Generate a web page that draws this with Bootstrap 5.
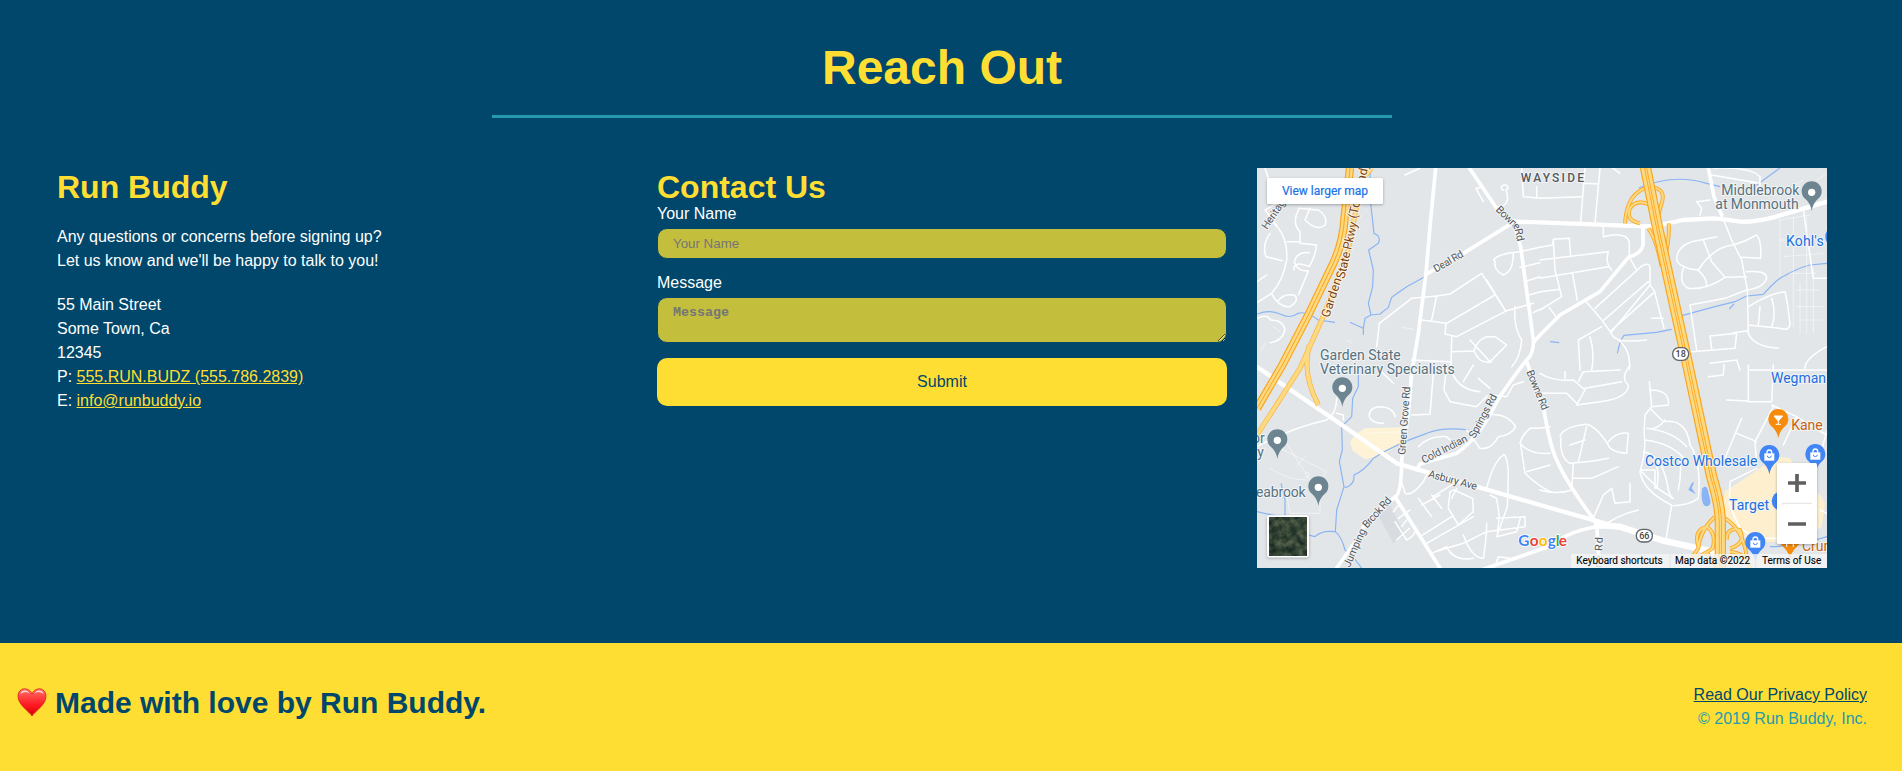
<!DOCTYPE html>
<html lang="en">
<head>
<meta charset="utf-8">
<meta name="viewport" content="width=device-width, initial-scale=1">
<title>Run Buddy</title>
<link href="https://cdn.jsdelivr.net/npm/bootstrap@5.3.0/dist/css/bootstrap.min.css" rel="stylesheet">
<style>
:root{--navy:#00476b;--sun:#ffde33;--teal:#259aad}
body{font-family:"Liberation Sans",Arial,sans-serif;background:var(--sun);color:#fff;overflow:hidden}
.reach{background:var(--navy);height:643px;padding:40px 75px 0 57px}
.reach h2{font-size:48px;line-height:56px;color:var(--sun);border-bottom:3px solid var(--teal);width:900px;height:78px}
.reach h3{font-size:32px;line-height:37px;color:var(--sun);padding-top:1px}
.cols{--bs-gutter-x:30px;margin-top:50px}
.info a{color:var(--sun)}
.info p{margin-top:19px}
.info address{margin-top:20px}
.contact label{line-height:20px;display:block}
.contact form{margin-top:-2px}
.field{display:block;width:100%;border:1px solid var(--navy);border-radius:10px;background:#c4be3d;padding:0 15px;font-size:13.333px;color:var(--navy);outline:0}
.field::placeholder{color:#757575;opacity:1}
input.field{height:31px;margin:4px 0 14px;font-family:"Liberation Sans",sans-serif}
textarea.field{height:46px;margin-top:4px;padding-top:7px;font-family:"Liberation Mono",monospace;font-weight:700;line-height:15px;resize:vertical}
.btn-send,.btn-send:hover{width:100%;height:48px;background:var(--sun);color:var(--navy);border:0;border-radius:10px;margin-top:15px;padding:0}
.roadmap{display:block;width:570px;height:400px;font-family:Roboto,sans-serif}
.foot{height:128px;background:var(--sun);padding:0 35px 0 17px}
.foot h2{font-size:30px;line-height:36px;color:var(--navy);margin-top:42px}
.legal{margin-top:40px;color:var(--teal)}
.legal a{color:var(--navy)}
.w{fill:none;stroke:#fff;stroke-linecap:round;stroke-linejoin:round}
.minor{stroke-width:4.5}.tiny{stroke-width:2.5;opacity:.6}
.river{fill:none;stroke:#8ab4f4;stroke-width:3.5;stroke-linejoin:round}
.lbl{paint-order:stroke;stroke:#f2f4f5;stroke-width:6px;stroke-linejoin:round;font-size:42px}
.rd{font-size:32px;fill:#54585c}.poi{fill:#56727f}.shop{fill:#1a6fe0}
</style>
</head>
<body>
<section class="reach">
  <h2 class="fw-bold text-center mx-auto mb-0">Reach Out</h2>
  <div class="row cols">
    <div class="col-4 info">
      <h3 class="fw-bold mb-0">Run Buddy</h3>
      <p class="mb-0">Any questions or concerns before signing up?<br>Let us know and we'll be happy to talk to you!</p>
      <address class="mb-0">55 Main Street<br>Some Town, Ca<br>12345<br>P: <a href="#">555.RUN.BUDZ (555.786.2839)</a><br>E: <a href="#">info@runbuddy.io</a></address>
    </div>
    <div class="col-4 contact">
      <h3 class="fw-bold mb-0">Contact Us</h3>
      <form>
        <label for="name">Your Name</label>
        <input class="field" id="name" placeholder="Your Name">
        <label for="msg">Message</label>
        <textarea class="field" id="msg" placeholder="Message"></textarea>
        <button type="button" class="btn btn-send">Submit</button>
      </form>
    </div>
    <div class="col-4">
      <svg class="roadmap" viewBox="21 24 1710 1200">
        <defs>
          <path id="pin" d="M0 56C-3 38-9 30-18 21A30 30 0 1 1 18 21C9 30 3 38 0 56Z"/>
          <g id="bag"><use href="#pin" fill="#4285f4"/><path d="M-15-8H15V14H-15Z" fill="#fff"/><path d="M-7-7V-11a7 7 0 0 1 14 0V-7" fill="none" stroke="#fff" stroke-width="4"/><path d="M-6-1a6 6 0 0 0 12 0" fill="none" stroke="#4285f4" stroke-width="3"/></g>
          <g id="place"><use href="#pin" fill="#6c8591"/><circle r="11" fill="#fff"/></g>
          <filter id="sh" x="-20%" y="-20%" width="140%" height="150%"><feDropShadow dx="0" dy="3" stdDeviation="4" flood-opacity=".3"/></filter>
          <filter id="aerial" x="0" y="0" width="1" height="1" color-interpolation-filters="sRGB"><feTurbulence type="fractalNoise" baseFrequency=".05" numOctaves="4" seed="8"/><feColorMatrix values=".42 0 0 0 0  .38 0 0 0 .08  .28 0 0 0 .07  0 0 0 0 1"/></filter>
        </defs>
        <rect x="21" y="24" width="1710" height="1200" fill="#e2e6e9"/>
        <!-- shaded areas -->
        <path d="M345 805L460 802 455 850 400 885 345 898 308 872 300 845 318 822Z" fill="#fef3d6"/>
        <path d="M1440 985L1500 945 1580 890 1620 895 1650 950 1710 1005 1725 1030 1715 1100 1640 1145 1500 1145 1440 1090 1420 1050 1422 995Z" fill="#fef0cf"/>
        <path d="M385 1065L420 1035 465 1125 430 1150Z" fill="#d8dce1"/>
        <path d="M1358 985q8-12 15 3l9 38q-2 15-17 12-14-10-9-53ZM1325 970l8-4-8 18 12 18-22-12Z" fill="#8ab4f4"/>
        <!-- streams -->
        <path class="river" d="M21 462Q60 448 90 462 120 478 145 460 170 452 205 480L255 487M300 487L340 505V524M360 24L362 130 372 220Q388 225 388 240L385 250 356 270 370 330 368 380 355 430 363 465M340 505L345 475 363 465 390 462 415 442 425 412 470 380 522 352M325 615L325 680 308 715 305 770 275 800 277 870 268 905 282 980 260 1050 256 1115Q215 1110 195 1130L155 1120M256 1115Q275 1130 285 1170L305 1185 335 1224M284 983Q315 975 312 945 345 930 370 895 430 855 530 820 580 800 655 810M21 1055Q60 1065 105 1070V1020L93 970M1166 84Q1270 40 1370 70L1410 80M1500 90Q1540 60 1590 24M1102 580Q1110 540 1122 526L1220 517 1265 508M1295 467L1395 440 1455 425 1490 408 1540 403Q1570 370 1590 355 1640 325 1680 315L1731 310M1438 447L1452 432M900 545L928 548M1560 1160Q1640 1160 1731 1130"/>
        <!-- neighbourhood streets, quadrant by quadrant -->
        <g class="w minor">
          <path d="M130 60L60 180Q115 220 110 300 100 360 65 400L21 428M45 24L80 130 45 150 80 195M145 145L205 150Q235 170 225 195 200 215 165 180L180 145M145 150Q125 190 150 215V245H112M150 250L200 255Q195 290 178 320 130 300 132 330M178 278Q140 275 133 305 140 335 175 333L145 405M65 402Q90 445 120 440 150 420 133 405 100 400 85 422M60 220Q35 255 48 290L98 302M50 345L21 365M21 475Q50 460 62 480 100 480 105 510 95 545 60 548"/>
          <path d="M380 560L388 490 485 415 560 408 600 402 695 340 765 450M545 480L560 408M515 480L590 490 735 405M588 490L585 522 620 530 770 452 850 430M710 360L765 450M605 530L603 625M603 575L672 573Q680 540 710 530L735 530 770 555 720 605 660 540M672 573Q690 615 725 605M795 440Q790 500 815 540 810 595 785 620M730 300Q745 280 810 275L870 262M810 322L870 308M832 362L870 350M838 405L870 395M850 458L870 448M735 302Q730 330 760 345 790 335 790 280M700 125L678 85 700 80M760 90a10 8 0 1 1 8 0Q785 140 740 140M815 24L820 110 870 115M860 80V110M855 60H870M485 600L600 605M465 45L510 24"/>
        </g>
        <g class="w minor" transform="translate(870)">
          <path d="M0 115L125 110M135 24L122 186M180 24L165 190M130 70L175 72M190 200V230L215 225Q265 220 268 250V290M0 300L205 275Q195 310 215 330M0 262L38 255 40 238 88 235 92 288M0 355L205 320M40 238L45 330 65 410 0 450M97 338L112 420M0 395L60 388M28 443L48 470M165 445L305 318Q330 305 330 325V375L215 515M330 375L345 395 210 515M192 480L325 365M268 292L290 330M138 425Q190 480 220 530 240 550 320 540M185 500L115 540 120 630M150 530Q165 580 155 630M220 530Q275 560 268 630M240 40L218 24M345 400L372 505M335 475L370 475M530 230L455 245Q410 260 410 300 420 325 475 330 520 260 580 255 615 245 650 225 665 240 662 295L605 292M490 240L515 305 555 352 620 350M430 325Q415 370 445 385 500 390 555 352M475 332Q500 350 500 380M620 335Q680 330 680 355 670 385 620 390M470 570L450 435 555 415 620 390M545 165L575 240 605 300 622 390 625 520Q640 560 715 565M625 440Q690 400 735 395L742 430 750 490Q750 515 720 505L625 495M660 440L655 495M695 415Q710 460 695 500M455 575L585 565 590 520 510 528 515 565M580 518L622 512M510 610L590 600 600 630M795 625Q795 595 860 560M515 45L660 70M790 150L820 355H860M520 24Q630 20 660 50V80M470 125L510 120M480 165L485 145 470 125"/>
        </g>
        <g class="w minor" transform="translate(0 615)">
          <path d="M21 245Q120 190 230 165 260 145 260 100M260 145L280 150V165M435 155Q430 125 385 125 355 130 358 155 365 175 400 175M395 20L430 55M485 150L540 148 552 0M590 0L582 75 600 110 680 125 712 92M600 0Q615 75 690 80M640 50L670 0M685 40L720 70M730 90L770 95 790 60 820 50M705 150Q770 140 797 185 785 210 745 215 725 255 690 250L650 195M505 245Q540 210 590 215L610 235M450 335L465 385Q485 395 520 350L530 330M550 395L620 350M710 370Q730 290 760 270 770 265 775 320L772 425 740 515 800 500 812 455M720 390L740 400 748 455 742 510M595 425L600 380 612 375 668 400 670 440 625 480 595 430M620 370L605 400M510 515L605 455M530 535L670 455M555 560L640 535 710 500 825 485V455L740 460M640 510Q665 580 700 580 710 520 710 475M590 545Q610 590 670 580M545 565L590 545M505 400L545 455M515 420L570 390M545 390L575 430M450 415L430 440M480 435L445 460M470 465L455 485M478 490L440 525M900 265Q840 270 810 235 815 210 840 190 875 190 900 185M812 240L825 325Q860 360 900 380M830 320L900 300M735 605L745 575 780 580M495 500Q490 515 470 525L435 470"/>
        </g>
        <g class="w minor" transform="translate(870 615)">
          <path d="M0 25Q40 50 100 45L135 75 110 120 180 110Q265 100 265 60 240 40 270 0M115 50L130 20 240 15M135 70L245 50M75 40V20M0 85L80 85 110 115M60 215Q70 185 140 178 170 185 205 240 210 260 260 265L265 205Q230 200 205 230M62 220Q60 280 90 295 160 290 205 280M90 240L135 225M100 295L95 375Q50 390 0 375M100 340L155 340 235 305M115 290L140 185M328 50L335 125 385 120Q390 75 332 75M335 125L315 150 312 200Q320 260 300 320 310 380 395 420L385 480 378 525M330 130L370 170Q440 160 450 240 485 290 475 400 450 420 400 422M320 190Q400 200 440 245M315 225Q400 235 440 290M310 260Q370 270 385 375L395 400M300 315H345L345 370M345 290Q360 320 350 370M420 280Q425 330 415 375M400 400L360 375 305 320M375 165Q360 185 340 190M155 470L190 390 215 370 225 415 270 410V355M180 490Q230 450 295 435M505 35L550 30 552 0M625 0V108L560 105M625 15H860M625 110H695L700 0M695 120L770 155 860 210M700 125L645 230 650 300M770 155L730 240M605 160L555 280M590 205L650 230M650 310L570 350 568 420 600 490 650 520 780 520M790 170L860 210M835 290L860 200M840 435L860 445M520 570L590 600"/>
        </g>
        <g class="w tiny">
          <path d="M290 545q10-10 15 5M45 550L35 570M458 502L490 508M70 500L90 515M80 860L230 935 195 985M110 850L180 960M60 925Q110 960 170 960M140 920L165 890M165 940a7 7 0 1 1 3 10M110 1000L120 1060 210 1060V1015M350 820L455 815"/>
          <path d="M1590 180V350M1630 170V500M1670 170V520M1590 240H1690M1600 290L1720 280M1620 340H1700M1640 390H1710M1640 440H1720M1650 480H1720M1690 330V520M1650 370V520M1590 180L1680 165M1610 90L1660 60M1700 60L1731 40"/>
        </g>
        <!-- main roads -->
        <path class="w" stroke-width="11" d="M557 24L540 200 528 340 505 520 485 640 475 760 455 900M528 343L640 280 785 190M658 24L740 145 790 185 812 260 850 540M850 548L870 525 930 465 1050 395 1135 292Q1175 280 1179 255V205M851 540Q850 585 830 600 760 690 735 735 690 830 620 880L510 912 500 930M830 605L880 740Q900 860 920 900 950 970 1040 1090L1048 1224M1375 24L1392 110 1415 165M455 900Q455 1010 430 1015 350 1065 320 1140L260 1224M435 1010L570 1224M700 1228L895 1160Q970 1105 1060 1098"/>
        <path class="w" stroke-width="13" d="M785 185L870 187 1180 199 1215 198 1300 180 1390 175Q1430 178 1470 185 1510 187 1570 172L1731 125M21 621L240 770 440 910 870 1035 1100 1100 1240 1140 1400 1180"/>
        <path class="w" stroke-width="19" d="M1040 1095L1110 1100 1240 1142 1400 1178"/>
        <!-- highways: orange casing, yellow fill -->
        <g fill="none">
          <path d="M365 24L335 60 314 170 290 290 215 480 150 625 21 825M178 555Q155 640 205 735" stroke="#f9b23a" stroke-width="15"/>
          <path d="M365 24L335 60 314 170 290 290 215 480 150 625 21 825M178 555Q155 640 205 735" stroke="#fdd981" stroke-width="11"/>
          <path d="M300 24L284 170Q280 245 250 310L175 465 97 615 21 745" stroke="#f9a51f" stroke-width="25"/>
          <path d="M300 24L284 170Q280 245 250 310L175 465 97 615 21 745" stroke="#fdd981" stroke-width="18"/>
          <path d="M300 24L284 170Q280 245 250 310L175 465 97 615 21 745" stroke="#f9a51f" stroke-width="3"/>
          <path d="M1125 190Q1130 95 1200 80 1250 85 1235 130L1215 200M1170 190Q1125 180 1140 145 1160 115 1200 135M1195 205Q1220 240 1235 320M1256 190Q1260 240 1240 310M1395 1070Q1350 1110 1345 1165L1320 1200M1345 1160Q1330 1110 1370 1100 1400 1120 1388 1165L1340 1195M1425 1075Q1480 1110 1490 1190M1430 1140Q1430 1100 1470 1110 1490 1150 1440 1165M1370 1175L1400 1224M1440 1175Q1490 1180 1500 1224" stroke="#f9ac2c" stroke-width="12"/>
          <path d="M1125 190Q1130 95 1200 80 1250 85 1235 130L1215 200M1170 190Q1125 180 1140 145 1160 115 1200 135M1195 205Q1220 240 1235 320M1256 190Q1260 240 1240 310M1395 1070Q1350 1110 1345 1165L1320 1200M1345 1160Q1330 1110 1370 1100 1400 1120 1388 1165L1340 1195M1425 1075Q1480 1110 1490 1190M1430 1140Q1430 1100 1470 1110 1490 1150 1440 1165M1370 1175L1400 1224M1440 1175Q1490 1180 1500 1224" stroke="#fdd981" stroke-width="6"/>
          <path d="M1186 20L1222 200 1310 600 1385 950Q1412 1040 1411 1090V1230" stroke="#f9a51f" stroke-width="34"/>
          <path d="M1186 20L1222 200 1310 600 1385 950Q1412 1040 1411 1090V1230" stroke="#fdd981" stroke-width="27"/>
          <path d="M1186 20L1222 200 1310 600 1385 950Q1412 1040 1411 1090V1230" stroke="#f9a51f" stroke-width="9"/>
          <path d="M1186 20L1222 200 1310 600 1385 950Q1412 1040 1411 1090V1230" stroke="#fdd981" stroke-width="4"/>
        </g>
        <!-- road names -->
        <g class="lbl rd">
          <text transform="translate(51 210) rotate(-56)" textLength="116">Heritage</text>
          <text transform="translate(558 338) rotate(-30)" textLength="98">Deal Rd</text>
          <text transform="translate(736 151) rotate(44)" textLength="88">Bowne</text>
          <text transform="translate(794 208) rotate(78)" textLength="38">Rd</text>
          <text transform="translate(466 885) rotate(-86)" textLength="205">Green Grove Rd</text>
          <text transform="translate(521 911) rotate(-27)" textLength="150">Cold Indian</text>
          <text transform="translate(674 837) rotate(-62)" textLength="145">Springs Rd</text>
          <text transform="translate(533 951) rotate(15)" textLength="150">Asbury Ave</text>
          <text transform="translate(829 635) rotate(68)" textLength="127">Bowne Rd</text>
          <text transform="translate(299 1223) rotate(-66)" textLength="122">Jumping</text>
          <text transform="translate(351 1106) rotate(-48)" textLength="112">Brook Rd</text>
          <text transform="translate(1055 1224) rotate(-88)" textLength="92">ne Rd</text>
        </g>
        <g class="lbl" style="font-size:37px;fill:#7b4514;stroke:#fff4df">
          <text transform="translate(237 475) rotate(-72)" textLength="123">Garden</text>
          <text transform="translate(283 358) rotate(-77)" textLength="174">State Pkwy</text>
          <text transform="translate(319 177) rotate(-77)" textLength="166">(Toll road)</text>
        </g>
        <!-- places -->
        <text class="lbl" x="812" y="67" textLength="190" style="font-size:36px;font-weight:500;fill:#55595d">WAYSIDE</text>
        <g class="lbl poi">
          <text x="1414" y="106" textLength="234">Middlebrook</text><text x="1396" y="147" textLength="250">at Monmouth</text>
          <text x="210" y="600" textLength="242">Garden State</text><text x="210" y="642" textLength="404">Veterinary Specialists</text>
          <text x="6" y="849">or</text><text x="7" y="892">ry</text><text x="18" y="1011" textLength="149">eabrook</text>
        </g>
        <g class="lbl shop">
          <text x="1608" y="258" textLength="113">Kohl's</text><text x="1563" y="669" textLength="165">Wegman</text>
          <text x="1185" y="918" textLength="337">Costco Wholesale</text><text x="1437" y="1050" textLength="120">Target</text>
        </g>
        <g class="lbl" style="fill:#c8620f"><text x="1624" y="810" textLength="94">Kane</text><text x="1656" y="1173">Crum</text></g>
        <use href="#place" x="1685" y="97"/><use href="#place" x="277" y="685"/><use href="#place" x="82" y="841"/><use href="#place" x="205" y="982"/>
        <g transform="translate(1585 780)"><use href="#pin" fill="#f78b0c"/><path d="M-13-12H13L0 3ZM0 0V12M-8 13H8" fill="#fff" stroke="#fff" stroke-width="3"/></g>
        <g transform="translate(1620 1142)"><use href="#pin" fill="#f78b0c"/><path d="M-10-14V18M10-14V18M-15-10V0H-5V-10" fill="none" stroke="#fff" stroke-width="4"/></g>
        <use href="#bag" x="1558" y="888"/><use href="#bag" x="1696" y="885"/><use href="#bag" x="1516" y="1149"/>
        <circle cx="1594" cy="1023" r="29" fill="#4285f4"/><circle cx="1757" cy="230" r="31" fill="#4285f4"/>
        <g fill="#fff" stroke="#60656a" stroke-width="4"><rect x="1268" y="563" width="48" height="38" rx="18"/><rect x="1159" y="1108" width="48" height="38" rx="18"/></g>
        <g font-size="27" font-weight="500" fill="#444" text-anchor="middle"><text x="1292" y="592">18</text><text x="1183" y="1137">66</text></g>
        <!-- controls -->
        <text y="1157" font-size="46" font-weight="700" style="font-family:Lato,sans-serif" stroke="#fff" stroke-width="5" paint-order="stroke"><tspan x="805" fill="#4285f4">G</tspan><tspan x="839" fill="#ea4335">o</tspan><tspan x="866" fill="#fbbc05">o</tspan><tspan x="893" fill="#4285f4">g</tspan><tspan x="917" fill="#34a853">l</tspan><tspan x="926" fill="#ea4335">e</tspan></text>
        <g filter="url(#sh)"><rect x="51" y="54" width="348" height="78" rx="5" fill="#fff"/></g>
        <text x="96" y="105" font-size="36" textLength="258" fill="#1a73e8" stroke="#1a73e8" stroke-width=".6">View larger map</text>
        <g filter="url(#sh)"><rect x="51" y="1066" width="126" height="126" rx="7" fill="#fff"/></g>
        <rect x="57" y="1072" width="114" height="114" fill="#34473e" filter="url(#aerial)"/>
        <g filter="url(#sh)"><rect x="1581" y="909" width="120" height="243" rx="5" fill="#fff"/></g>
        <path d="M1614 969H1668M1641 942V996M1614 1092H1668" stroke="#606060" stroke-width="11"/><path d="M1596 1030H1686" stroke="#e2e2e2" stroke-width="3"/>
        <rect x="963" y="1182" width="768" height="42" fill="#f5f5f5" opacity=".8"/><path d="M1260 1182V1224M1517 1182V1224" stroke="#ddd" stroke-width="2"/>
        <g font-size="30" fill="#000" stroke="#000" stroke-width=".3"><text x="979" y="1212" textLength="259">Keyboard shortcuts</text><text x="1275" y="1212" textLength="225">Map data ©2022</text><text x="1536" y="1212" textLength="178">Terms of Use</text></g>
      </svg>
    </div>
  </div>
</section>
<footer class="foot d-flex justify-content-between">
  <h2 class="fw-bold mb-0 d-flex">
    <svg width="30" height="36" viewBox="0 0 30 36" class="me-2" aria-label="heart">
      <defs><linearGradient id="hg" x2="0" y2="1"><stop stop-color="#ff7772"/><stop offset=".25" stop-color="#ff4a48"/><stop offset=".6" stop-color="#ff1822"/><stop offset="1" stop-color="#d50008"/></linearGradient></defs>
      <path d="M15 31C13 27 1 20 1 11.500C1 1.500 12.500 2 15 9C17.500 2 29 1.500 29 11.500C29 20 17 27 15 31Z" fill="url(#hg)" stroke="#d91f16" stroke-width=".8"/>
      <path d="M3.500 9Q4 5.500 8 5.500 11 5.500 12.500 8.500 8 5.500 3.500 9ZM17.500 8.500Q19 5.500 22 5.500 26 5.500 26.500 9 22 5.500 17.500 8.500Z" fill="#ffd4cf"/>
    </svg><span>Made with love by Run Buddy.</span>
  </h2>
  <div class="legal text-end"><a href="#">Read Our Privacy Policy</a><br>© 2019 Run Buddy, Inc.</div>
</footer>
<script src="https://cdn.jsdelivr.net/npm/bootstrap@5.3.0/dist/js/bootstrap.bundle.min.js"></script>
</body>
</html>
